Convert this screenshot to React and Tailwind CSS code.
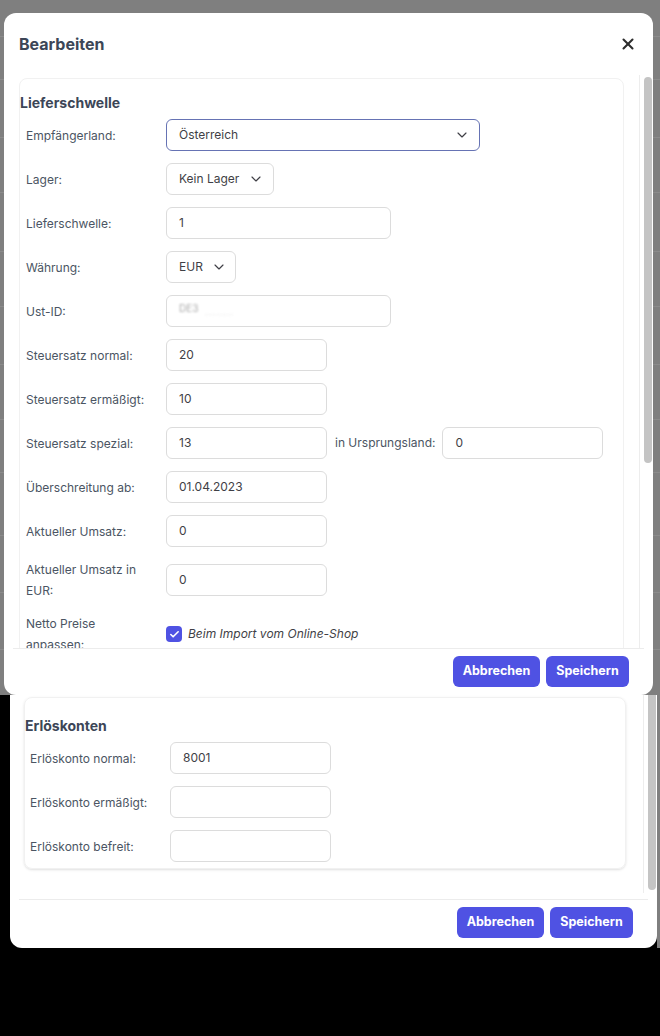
import React from "react";
import { ChevronDown, X, Check } from "lucide-react";

const font = { fontFamily: "Inter, 'Noto Sans', sans-serif" };

// rows of the table page behind the overlay
const pageRows = [37, 43, 58, 55, 59, 55, 58, 55, 53, 63, 57, 57];

const Field = ({ label, children }) => (
  <div className="flex items-center">
    <div className="w-[122px] shrink-0 text-[12px] leading-[21px] text-[#4b5563]">{label}</div>
    <div className="ml-[18px] flex items-center">{children}</div>
  </div>
);

const Input = ({ value, w = "w-[161px]" }) => (
  <div
    className={`${w} h-[32px] rounded-md border border-[#dcdcdc] px-3 flex items-center text-[12px] text-[#3f3f46] whitespace-nowrap`}
  >
    {value}
  </div>
);

const Select = ({ value, w, focused }) => (
  <div
    className={`${w} h-[32px] rounded-md border ${
      focused ? "border-[#6673b4]" : "border-[#dcdcdc]"
    } pl-3 pr-[9px] flex items-center justify-between gap-2 text-[12px] text-[#3f3f46] whitespace-nowrap`}
  >
    <span>{value}</span>
    <ChevronDown size={16} strokeWidth={1.75} className="text-[#3f3f46] shrink-0" />
  </div>
);

const Footer = () => (
  <div className="mx-[9px] border-t border-[#ececec] flex justify-end gap-[6px] pt-[7px] pr-[15px]">
    <button className="h-[31px] w-[87px] rounded-md bg-[#4f52e3] text-white text-[12.5px] font-bold">
      Abbrechen
    </button>
    <button className="h-[31px] w-[83px] rounded-md bg-[#4f52e3] text-white text-[12.5px] font-bold">
      Speichern
    </button>
  </div>
);

export default function App() {
  return (
    <div className="w-[660px] h-[1036px] bg-black flex flex-col" style={font}>
      {/* overlay with the edit dialog */}
      <div className="relative h-[695px] shrink-0 bg-[#7f7f7f] overflow-hidden">
        <div className="flex flex-col">
          {pageRows.map((h, i) => (
            <div key={i} className="border-b border-[#8b8b8b]" style={{ height: h }} />
          ))}
        </div>

        <div className="absolute left-[4px] top-[13px] w-[649px] h-[682px] bg-white rounded-xl flex flex-col">
          <div className="h-[62px] shrink-0 flex items-center justify-between pl-[15px] pr-[16px]">
            <h2 className="text-[16px] font-bold text-[#3c4657]">Bearbeiten</h2>
            <X size={18} strokeWidth={2.75} className="text-[#2d2d2d]" />
          </div>

          <div className="flex-1 min-h-0 flex pl-[15px] overflow-hidden">
            <div className="w-[605px] shrink-0 mt-[3px] border border-[#f1f1f1] rounded-lg pt-[14px] self-start">
              <h3 className="text-[14px] font-bold leading-[20px] text-[#3c4657]">Lieferschwelle</h3>
              <div className="mt-[6px] pl-[6px] flex flex-col gap-[12px]">
                <Field label="Empfängerland:">
                  <Select value="Österreich" w="w-[314px]" focused />
                </Field>
                <Field label="Lager:">
                  <Select value="Kein Lager" w="w-[108px]" />
                </Field>
                <Field label="Lieferschwelle:">
                  <Input value="1" w="w-[225px]" />
                </Field>
                <Field label="Währung:">
                  <Select value="EUR" w="w-[70px]" />
                </Field>
                <Field label="Ust-ID:">
                  <Input
                    w="w-[225px]"
                    value={
                      <span className="flex items-center gap-[6px] blur-[0.8px]">
                        <span className="text-[#a8a8a8] text-[10px] -mt-[6px]">DE3</span>
                        <span className="text-[#e6e6e6] text-[10px] mt-[6px]">··········</span>
                      </span>
                    }
                  />
                </Field>
                <Field label="Steuersatz normal:">
                  <Input value="20" />
                </Field>
                <Field label="Steuersatz ermäßigt:">
                  <Input value="10" />
                </Field>
                <Field label="Steuersatz spezial:">
                  <Input value="13" />
                  <span className="ml-[8px] mr-[7px] text-[12px] text-[#4b5563] whitespace-nowrap">in Ursprungsland:</span>
                  <Input value="0" />
                </Field>
                <Field label="Überschreitung ab:">
                  <Input value="01.04.2023" />
                </Field>
                <Field label="Aktueller Umsatz:">
                  <Input value="0" />
                </Field>
                <Field label="Aktueller Umsatz in EUR:">
                  <Input value="0" />
                </Field>
                <Field label="Netto Preise anpassen:">
                  <div className="flex items-center gap-[6px]">
                    <span className="w-[16px] h-[16px] rounded bg-[#4f52e3] flex items-center justify-center">
                      <Check size={11} strokeWidth={3.5} className="text-white" />
                    </span>
                    <span className="text-[12px] italic text-[#3f3f46] whitespace-nowrap">Beim Import vom Online-Shop</span>
                  </div>
                </Field>
              </div>
            </div>

            {/* scrollbar */}
            <div className="ml-[15px] w-[14px] shrink-0 border-l border-[#ededed] pt-[2px]">
              <div className="ml-[4px] w-[8px] h-[386px] rounded-full bg-[#c4c4c4]" />
            </div>
          </div>

          <div className="h-[47px] shrink-0">
            <Footer />
          </div>
        </div>
      </div>

      {/* lower part of the dialog, scrolled to the revenue accounts */}
      <div className="flex">
        <div className="w-[10px] shrink-0" />
        <div className="w-[647px] h-[253px] shrink-0 bg-white rounded-b-xl flex flex-col">
          <div className="h-[204px] shrink-0 flex pl-[14px] overflow-hidden">
            <div className="w-[602px] shrink-0 mt-[2px] self-start border border-[#f1f1f1] rounded-lg shadow-sm pt-[18px] pb-[6px]">
              <h3 className="text-[14px] font-bold leading-[20px] text-[#3c4657]">Erlöskonten</h3>
              <div className="mt-[6px] pl-[5px] flex flex-col gap-[12px]">
                <Field label="Erlöskonto normal:">
                  <Input value="8001" />
                </Field>
                <Field label="Erlöskonto ermäßigt:">
                  <Input value="" />
                </Field>
                <Field label="Erlöskonto befreit:">
                  <Input value="" />
                </Field>
              </div>
            </div>
            <div className="ml-[17px] w-[14px] h-[198px] shrink-0 border-l border-[#ededed]">
              <div className="ml-[4px] w-[8px] h-[195px] rounded-b-full bg-[#c4c4c4]" />
            </div>
          </div>
          <div className="flex-1">
            <Footer />
          </div>
        </div>
        <div className="w-[3px] h-[253px] bg-[#7f7f7f]" />
      </div>
    </div>
  );
}
